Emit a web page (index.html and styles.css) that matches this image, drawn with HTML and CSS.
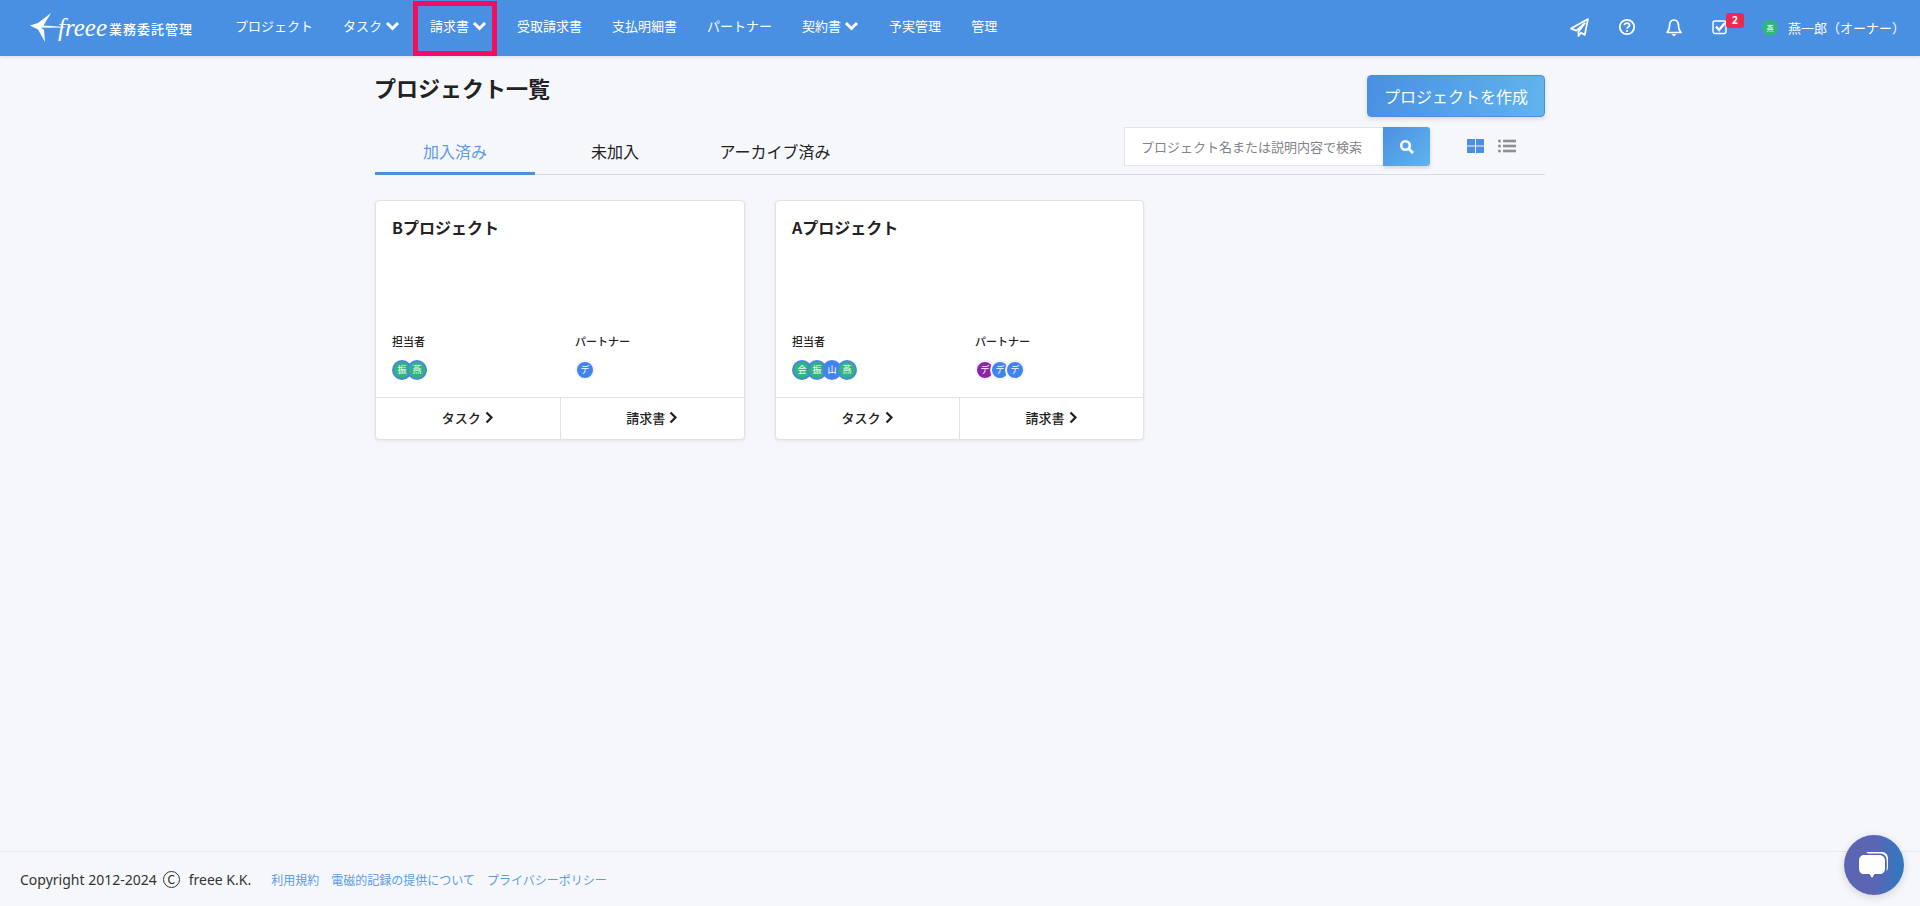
FILE: index.html
```html
<!DOCTYPE html>
<html lang="ja">
<head>
  <meta charset="UTF-8">
  <title>プロジェクト一覧</title>
  <link rel="stylesheet" href="styles.css">
</head>
<body>
  <header class="topbar">
    <a class="logo">
      <svg class="logo-plane" width="36" height="30" viewBox="0 0 36 30">
        <path d="M22 0 L9 10 L1 12.500 L9 16.500 L16 29 L15 17 L12 14.800 L36 14.600 L36 14 L14.500 12.500 Z" fill="#fff"/>
      </svg>
      <span class="logo-freee">freee</span>
      <span class="logo-name">業務委託管理</span>
    </a>
    <nav class="nav">
      <a class="nav-item">プロジェクト</a>
      <a class="nav-item">タスク<svg class="chev" width="15" height="10" viewBox="0 0 15 10"><path d="M2 2 L7.500 7.500 L13 2" fill="none" stroke="#fff" stroke-width="3"/></svg></a>
      <a class="nav-item marked">請求書<svg class="chev" width="15" height="10" viewBox="0 0 15 10"><path d="M2 2 L7.500 7.500 L13 2" fill="none" stroke="#fff" stroke-width="3"/></svg></a>
      <a class="nav-item">受取請求書</a>
      <a class="nav-item">支払明細書</a>
      <a class="nav-item">パートナー</a>
      <a class="nav-item">契約書<svg class="chev" width="15" height="10" viewBox="0 0 15 10"><path d="M2 2 L7.500 7.500 L13 2" fill="none" stroke="#fff" stroke-width="3"/></svg></a>
      <a class="nav-item">予実管理</a>
      <a class="nav-item">管理</a>
    </nav>
    <div class="top-icons">
      <svg width="19" height="19" viewBox="0 0 18 18"><path d="M17 1 L1 10 L6 12 L14 5 L8 13 L8 17 L10.500 14 L14 16 Z" fill="none" stroke="#fff" stroke-width="1.700" stroke-linejoin="round"/></svg>
      <svg width="18" height="18" viewBox="0 0 18 18"><circle cx="9" cy="9" r="7.200" fill="none" stroke="#fff" stroke-width="1.800"/><path d="M6.500 7.200 C6.500 4.500 11.500 4.500 11.500 7.200 C11.500 9 9 9 9 10.800" fill="none" stroke="#fff" stroke-width="1.800"/><circle cx="9" cy="13" r="1.100" fill="#fff"/></svg>
      <svg width="18" height="19" viewBox="0 0 18 19"><path d="M9 2 C5.500 2 4.500 5 4.500 8 C4.500 11 3.500 13 2 14.500 L16 14.500 C14.500 13 13.500 11 13.500 8 C13.500 5 12.500 2 9 2 Z" fill="none" stroke="#fff" stroke-width="1.700" stroke-linejoin="round"/><path d="M6.500 16 H11.500 L9 18.500 Z" fill="#fff"/></svg>
      <span class="task-icon">
        <svg width="16" height="16" viewBox="0 0 16 16"><rect x="1" y="2" width="13" height="12.500" rx="2" fill="none" stroke="#fff" stroke-width="1.400"/><path d="M4 7.500 L7 11 L13 4" fill="none" stroke="#fff" stroke-width="2.400"/></svg>
        <span class="badge">2</span>
      </span>
    </div>
    <div class="user">
      <span class="user-mark">燕</span>
      <span>燕一郎（オーナー）</span>
    </div>
  </header>

  <main class="main">
    <div class="page-head">
      <h1>プロジェクト一覧</h1>
      <button class="btn-create" type="button">プロジェクトを作成</button>
    </div>

    <div class="tabbar">
      <div class="tabs">
        <a class="tab active">加入済み</a>
        <a class="tab">未加入</a>
        <a class="tab">アーカイブ済み</a>
      </div>
      <div class="tools">
        <div class="search">
          <input class="search-input" type="text" placeholder="プロジェクト名または説明内容で検索">
          <button class="search-btn" type="button">
            <svg width="15" height="15" viewBox="0 0 15 15"><circle cx="6.500" cy="6.500" r="4.300" fill="none" stroke="#fff" stroke-width="2.600"/><path d="M9.800 9.800 L14 14" stroke="#fff" stroke-width="2.800"/></svg>
          </button>
        </div>
        <div class="view-toggle">
          <svg width="17" height="14" viewBox="0 0 17 14"><path d="M0 0h8v6.500H0zM9 0h8v6.500H9zM0 7.500h8V14H0zM9 7.500h8V14H9z" fill="#4a90e2"/></svg>
          <svg width="18" height="14" viewBox="0 0 18 14" fill="#8b8f98"><circle cx="1.500" cy="2" r="1.500"/><circle cx="1.500" cy="7" r="1.500"/><circle cx="1.500" cy="12" r="1.500"/><rect x="5" y="0.700" width="13" height="2.600"/><rect x="5" y="5.700" width="13" height="2.600"/><rect x="5" y="10.700" width="13" height="2.600"/></svg>
        </div>
      </div>
    </div>

    <div class="cards">
      <section class="card">
        <div class="card-body">
          <h2>Bプロジェクト</h2>
          <div class="members">
            <div class="member-col">
              <div class="member-label">担当者</div>
              <div class="avatars">
                <span class="av green">振</span>
                <span class="av green">燕</span>
              </div>
            </div>
            <div class="member-col">
              <div class="member-label">パートナー</div>
              <div class="avatars">
                <span class="av blue">デ</span>
              </div>
            </div>
          </div>
        </div>
        <div class="card-links">
          <a class="card-link">タスク<svg width="10" height="13" viewBox="0 0 10 13"><path d="M2.500 1.500 L7.500 6.500 L2.500 11.500" fill="none" stroke="#222" stroke-width="2.200"/></svg></a>
          <a class="card-link">請求書<svg width="10" height="13" viewBox="0 0 10 13"><path d="M2.500 1.500 L7.500 6.500 L2.500 11.500" fill="none" stroke="#222" stroke-width="2.200"/></svg></a>
        </div>
      </section>

      <section class="card">
        <div class="card-body">
          <h2>Aプロジェクト</h2>
          <div class="members">
            <div class="member-col">
              <div class="member-label">担当者</div>
              <div class="avatars">
                <span class="av green">会</span>
                <span class="av green">振</span>
                <span class="av blue ring">山</span>
                <span class="av green">燕</span>
              </div>
            </div>
            <div class="member-col">
              <div class="member-label">パートナー</div>
              <div class="avatars">
                <span class="av purple">デ</span>
                <span class="av blue">デ</span>
                <span class="av blue">デ</span>
              </div>
            </div>
          </div>
        </div>
        <div class="card-links">
          <a class="card-link">タスク<svg width="10" height="13" viewBox="0 0 10 13"><path d="M2.500 1.500 L7.500 6.500 L2.500 11.500" fill="none" stroke="#222" stroke-width="2.200"/></svg></a>
          <a class="card-link">請求書<svg width="10" height="13" viewBox="0 0 10 13"><path d="M2.500 1.500 L7.500 6.500 L2.500 11.500" fill="none" stroke="#222" stroke-width="2.200"/></svg></a>
        </div>
      </section>
    </div>
  </main>

  <footer class="footer">
    <span class="copy">Copyright 2012-2024</span>
    <span class="copy-mark">C</span>
    <span class="copy">freee K.K.</span>
    <a class="foot-link first">利用規約</a>
    <a class="foot-link">電磁的記録の提供について</a>
    <a class="foot-link">プライバシーポリシー</a>
  </footer>

  <button class="chat" type="button">
    <svg width="32" height="30" viewBox="0 0 32 30">
      <path d="M8 2 H24 C28 2 30 5 30 9 V17 C30 19 29.500 20 28.500 21 C29 17 29 12 28.500 9 C28 5 25 3.500 21 3.500 H10 Z" fill="#fff"/>
      <path d="M6 5 H21 C25 5 27 7.500 27 11 V18 C27 22 25 24 21 24 H16.500 L14 28 L11.500 24 H6 C3 24 1 22 1 18 V11 C1 7.500 3 5 6 5 Z" fill="#fff"/>
    </svg>
  </button>
</body>
</html>
```

FILE: styles.css
```css
:root {
  --primary: #4a90e2;
  --background: #f5f7fb;
  --text: #222;
  --border: #dfe1e6;
}

* {
  box-sizing: border-box;
}

html, body {
  height: 100%;
}

body {
  margin: 0;
  display: flex;
  flex-direction: column;
  background: var(--background);
  color: var(--text);
  font-family: "Noto Sans CJK JP", "Noto Sans", sans-serif;
  font-size: 13px;
}

.topbar {
  flex: none;
  display: flex;
  align-items: center;
  height: 56px;
  background: var(--primary);
  color: #fff;
  box-shadow: 0 1px 3px rgba(0, 0, 0, 0.12);
}

.logo {
  display: flex;
  align-items: center;
  width: 235px;
  padding-left: 29px;
}

.logo-plane {
  flex: none;
}

.logo-freee {
  margin-left: -7px;
  font-family: "Liberation Serif", serif;
  font-style: italic;
  font-size: 25px;
  line-height: 30px;
  width: 51px;
}

.logo-name {
  font-size: 13px;
  font-weight: 500;
  letter-spacing: 1px;
  white-space: nowrap;
}

.nav {
  display: flex;
  align-items: center;
  gap: 30px;
  height: 56px;
}

.nav-item {
  position: relative;
  display: flex;
  align-items: center;
  gap: 3px;
  height: 56px;
  padding-bottom: 5px;
  white-space: nowrap;
}

.nav-item.marked::after {
  content: "";
  position: absolute;
  left: -17px;
  right: -10px;
  top: 1px;
  bottom: 0;
  border: 5px solid #f50d5c;
}

.top-icons {
  display: flex;
  align-items: center;
  gap: 29px;
  margin-left: auto;
  padding-bottom: 2px;
}

.task-icon {
  position: relative;
  display: flex;
}

.badge {
  position: absolute;
  left: 14px;
  top: -6px;
  width: 18px;
  height: 15px;
  border-radius: 3px;
  background: #ec2a4f;
  color: #fff;
  font-family: "Noto Sans", sans-serif;
  font-size: 10px;
  font-weight: 700;
  line-height: 14px;
  text-align: center;
}

.user {
  display: flex;
  align-items: center;
  gap: 10px;
  margin-left: 34px;
  padding-right: 15px;
  padding-bottom: 1px;
  font-size: 13px;
  white-space: nowrap;
}

.user-mark {
  width: 16px;
  height: 16px;
  border-radius: 50%;
  background: #2fb67c;
  font-size: 7px;
  line-height: 16px;
  text-align: center;
}

.main {
  flex: 1;
  width: 1170px;
  margin-left: 375px;
}

.page-head {
  display: flex;
  justify-content: space-between;
  align-items: flex-start;
  padding-top: 19px;
}

h1 {
  margin: -4px 0 0 -1px;
  font-size: 22px;
  font-weight: 700;
  line-height: 32px;
}

.btn-create {
  width: 178px;
  height: 42px;
  border: 1px solid #4a90e2;
  border-radius: 4px;
  background: linear-gradient(100deg, #4a90e2, #60b4ee);
  box-shadow: 0 2px 5px rgba(0, 0, 0, 0.12);
  color: #fff;
  font-family: inherit;
  font-size: 16px;
}

.tabbar {
  display: flex;
  justify-content: space-between;
  height: 59px;
  margin-top: -1px;
  padding-top: 11px;
  border-bottom: 1px solid #d8dbe2;
}

.tabs {
  display: flex;
  margin-top: 1px;
}

.tab {
  width: 160px;
  height: 47px;
  font-size: 16px;
  line-height: 46px;
  text-align: center;
  color: var(--text);
}

.tab.active {
  color: #5e9ae8;
  border-bottom: 3px solid var(--primary);
}

.tools {
  display: flex;
  align-items: flex-start;
}

.search {
  display: flex;
  width: 306px;
  height: 39px;
  margin-right: 37px;
}

.search-input {
  width: 259px;
  height: 39px;
  padding: 0 12px 0 16px;
  border: 1px solid #e1e5ea;
  border-right: 0;
  background: #fff;
  font-family: inherit;
  font-size: 13px;
}

.search-input::placeholder {
  color: #80848c;
}

.search-btn {
  display: flex;
  align-items: center;
  justify-content: center;
  width: 47px;
  height: 39px;
  padding: 0;
  border: 0;
  border-radius: 0 3px 3px 0;
  background: linear-gradient(135deg, #4a90e2, #60b4ee);
  box-shadow: 0 2px 4px rgba(0, 0, 0, 0.14);
}

.view-toggle {
  display: flex;
  align-items: center;
  gap: 14px;
  width: 78px;
  height: 38px;
}

.cards {
  display: grid;
  grid-template-columns: 370px 369px;
  gap: 30px;
  margin-top: 25px;
}

.card {
  display: flex;
  flex-direction: column;
  height: 240px;
  background: #fff;
  border: 1px solid #e0e2e8;
  border-radius: 4px;
  box-shadow: 0 1px 3px rgba(0, 0, 0, 0.08);
}

.card-body {
  flex: 1;
  display: flex;
  flex-direction: column;
  justify-content: space-between;
  padding: 13px 16px 17px;
}

h2 {
  margin: 0;
  font-size: 16px;
  font-weight: 700;
  line-height: 27px;
}

.members {
  display: flex;
}

.member-col {
  flex: none;
  width: 183px;
}

.member-label {
  font-size: 11px;
  font-weight: 500;
  line-height: 18px;
}

.avatars {
  display: flex;
  margin-top: 10px;
}

.av {
  width: 20px;
  height: 20px;
  border-radius: 50%;
  color: #fff;
  font-size: 9px;
  line-height: 16px;
  text-align: center;
  border: 2px solid #4a86e0;
}

.av + .av {
  margin-left: -5px;
}

.av.green {
  background: #2fb67c;
}

.av.blue {
  background: #3f84f0;
  border-color: #f1f3f8;
}

.av.blue.ring {
  border-color: #4a86e0;
}

.av.purple {
  background: #8e24aa;
  border-color: #f1f3f8;
}

.card-links {
  flex: none;
  display: flex;
  height: 42px;
  border-top: 1px solid #e0e2e8;
}

.card-link {
  flex: 1;
  display: flex;
  align-items: center;
  justify-content: center;
  gap: 3px;
  padding-bottom: 2px;
  font-size: 13px;
  font-weight: 500;
}

.card-link + .card-link {
  border-left: 1px solid #e0e2e8;
}

.footer {
  flex: none;
  display: flex;
  align-items: center;
  height: 55px;
  padding-left: 20px;
  border-top: 1px solid #e6e8ee;
  font-size: 12px;
}

.copy {
  font-family: "Noto Sans", sans-serif;
  font-size: 14px;
  color: #333;
}

.copy-mark {
  width: 17px;
  height: 17px;
  margin: 0 9px 0 6px;
  border: 1px solid #333;
  border-radius: 50%;
  font-size: 12px;
  line-height: 14px;
  text-align: center;
}

.foot-link {
  margin-left: 12px;
  color: #5e9ae8;
  font-size: 12px;
}

.foot-link.first {
  margin-left: 20px;
}

.chat {
  position: absolute;
  right: 16px;
  bottom: 11px;
  display: flex;
  align-items: center;
  justify-content: center;
  width: 60px;
  height: 60px;
  padding: 0;
  border: 0;
  border-radius: 50%;
  background: linear-gradient(90deg, #5b65b4 50%, #3079bf);
  box-shadow: 0 2px 8px rgba(0, 0, 0, 0.15);
}
```
